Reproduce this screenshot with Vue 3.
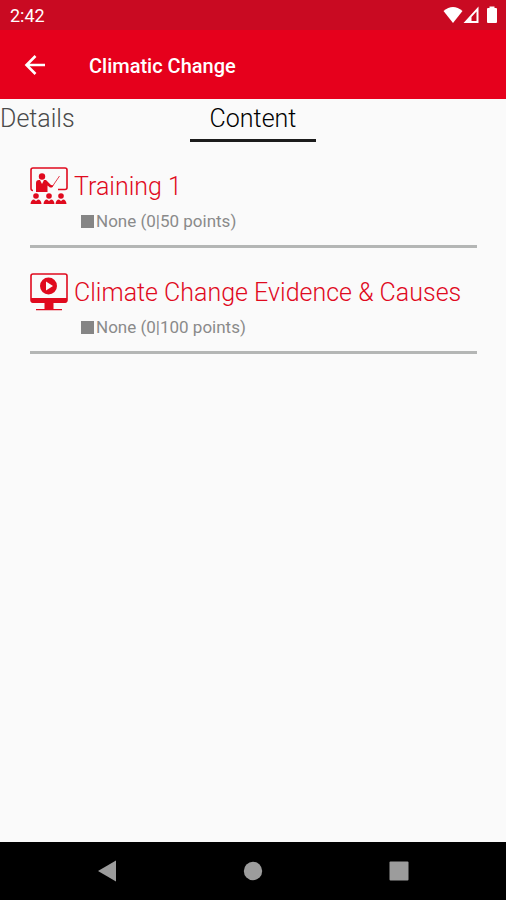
<template>
  <div class="app">
    <div class="status-bar">
      <span>2:42</span>
      <div class="status-icons">
        <svg class="wifi" width="20" height="18" viewBox="0 0 20 18">
          <path d="M0.500 5 Q10 -3 19.500 5 L10 17Z" fill="#fff" />
        </svg>
        <svg class="signal" width="17" height="18" viewBox="0 0 17 18">
          <path d="M15.500 0.500V17H0.500ZM13.500 5.500L8.500 11V15H13.500Z" fill="#fff" fill-rule="evenodd" />
        </svg>
        <svg class="battery" width="12" height="18" viewBox="0 0 12 18">
          <path d="M3.500 0.500H8.500V2H10Q11 2 11 3V16Q11 17 10 17H2Q1 17 1 16V3Q1 2 2 2H3.500Z" fill="#fff" />
        </svg>
      </div>
    </div>

    <header class="app-bar">
      <button class="back-btn" type="button" aria-label="Back">
        <svg width="22" height="22" viewBox="0 0 22 22" fill="none" stroke="#fff" stroke-width="2.600">
          <path d="M21 11H3M11.500 2L2.500 11L11.500 20" />
        </svg>
      </button>
      <h1 class="title">Climatic Change</h1>
    </header>

    <nav class="tabs">
      <button
        v-for="tab in tabs"
        :key="tab"
        class="tab"
        :class="{ active: tab === activeTab }"
        type="button"
        @click="activeTab = tab"
      >
        {{ tab }}
      </button>
    </nav>

    <main class="content">
      <section v-for="item in items" :key="item.title" class="item">
        <div class="item-head">
          <svg v-if="item.type === 'training'" width="38" height="38" viewBox="0 0 38 38">
            <path d="M3 23.500Q1 23.500 1 21.500V3Q1 1 3 1H35Q37 1 37 3V20.500Q37 22.500 35 22.500H28" fill="none" stroke="#e00a1e" stroke-width="1.600" />
            <circle cx="12" cy="9.500" r="3.200" fill="#e00a1e" />
            <path d="M6 25V16Q6 13 9 13H10L12 17L14 13H16L21 18L23.500 18.500L22 20.500H20L17.500 18.500V25Z" fill="#e00a1e" />
            <path d="M22 20L29.500 9" stroke="#e00a1e" stroke-width="0.800" />
            <g v-for="x in [6, 19, 31]" :key="x" fill="#e00a1e">
              <circle :cx="x" cy="29" r="2.800" />
              <path :d="`M${x - 5.5} 37Q${x - 5} 32.500 ${x - 2} 32.500L${x} 34L${x + 2} 32.500Q${x + 5} 32.500 ${x + 5.5} 37Z`" />
            </g>
          </svg>
          <svg v-else width="38" height="38" viewBox="0 0 38 38">
            <rect x="1" y="1" width="36" height="28" rx="2" fill="none" stroke="#e00a1e" stroke-width="1.600" />
            <path d="M1 25H37V28Q37 30 35 30H3Q1 30 1 28Z" fill="#e00a1e" />
            <circle cx="18.500" cy="13" r="8.500" fill="#e00a1e" />
            <path d="M16 8.500L23 13L16 17.500Z" fill="#fafafa" />
            <path d="M14.500 29H23.500V36H32V37.200H6V36H14.500Z" fill="#e00a1e" />
          </svg>
          <h2 class="item-title">{{ item.title }}</h2>
        </div>
        <p class="item-status">
          <span class="marker"></span>None (0|{{ item.points }} points)
        </p>
      </section>
    </main>

    <footer class="nav-bar">
      <button type="button" aria-label="Back">
        <svg width="22" height="22" viewBox="0 0 22 22"><path d="M2 11L20 0.500V21.500Z" fill="#9c9c9c" /></svg>
      </button>
      <button type="button" aria-label="Home">
        <svg width="22" height="22" viewBox="0 0 22 22"><circle cx="11" cy="11" r="9.200" fill="#9c9c9c" /></svg>
      </button>
      <button type="button" aria-label="Recent apps">
        <svg width="22" height="22" viewBox="0 0 22 22"><rect x="1.500" y="1.500" width="19" height="19" rx="1" fill="#9c9c9c" /></svg>
      </button>
    </footer>
  </div>
</template>

<script setup>
import { ref } from 'vue'

const tabs = ['Details', 'Content']
const activeTab = ref('Content')

const items = [
  { type: 'training', title: 'Training 1', points: 50 },
  { type: 'video', title: 'Climate Change Evidence & Causes', points: 100 }
]
</script>

<style>
body {
  margin: 0;
}
</style>

<style scoped>
.app {
  min-height: 100vh;
  display: flex;
  flex-direction: column;
  background: #fafafa;
  font-family: Roboto, sans-serif;
}

button {
  padding: 0;
  border: none;
  background: none;
  font: inherit;
  cursor: pointer;
}

svg {
  display: block;
  flex-shrink: 0;
}

/* Top bars */
.status-bar {
  height: 30px;
  padding: 0 8px 0 10px;
  display: flex;
  align-items: center;
  justify-content: space-between;
  background: #c90a22;
  color: #fff;
  font-size: 18px;
}

.status-icons {
  display: flex;
}

.battery {
  margin-left: 6px;
}

.app-bar {
  height: 69px;
  padding: 0 24px;
  display: flex;
  align-items: center;
  gap: 43px;
  background: #e6001c;
  color: #fff;
}

.title {
  margin: 0;
  font-size: 20px;
  font-weight: 500;
  line-height: 24px;
  padding-top: 2px;
}

/* Tabs */
.tabs {
  display: grid;
  grid-template-columns: 1fr auto 1fr;
  justify-items: start;
}

.tab {
  height: 43px;
  border-bottom: 3px solid transparent;
  color: #4a4a4a;
  font-size: 25px;
  font-weight: 300;
  line-height: 40px;
}

.tab.active {
  padding: 0 20px;
  border-color: #1c1c1c;
  color: #000;
}

/* Course items */
.content {
  flex: 1;
  padding: 24px 29px 24px 30px;
}

.item {
  margin-bottom: 24px;
  border-bottom: 3px solid #b4b6b5;
}

.item-head {
  display: flex;
  align-items: center;
  gap: 6px;
}

.item-title {
  margin: 0;
  padding-top: 2px;
  color: #e00a1e;
  font-size: 25px;
  font-weight: 300;
  line-height: 38px;
}

.item-status {
  margin: 0;
  padding: 3px 0 12px 51px;
  display: flex;
  align-items: center;
  color: #8a8a8a;
  font-size: 17px;
  line-height: 24px;
}

.marker {
  width: 13px;
  height: 13px;
  margin-right: 2px;
  background: #858585;
}

/* System navigation */
.nav-bar {
  height: 58px;
  display: flex;
  align-items: center;
  justify-content: center;
  gap: 124px;
  background: #000;
}
</style>
